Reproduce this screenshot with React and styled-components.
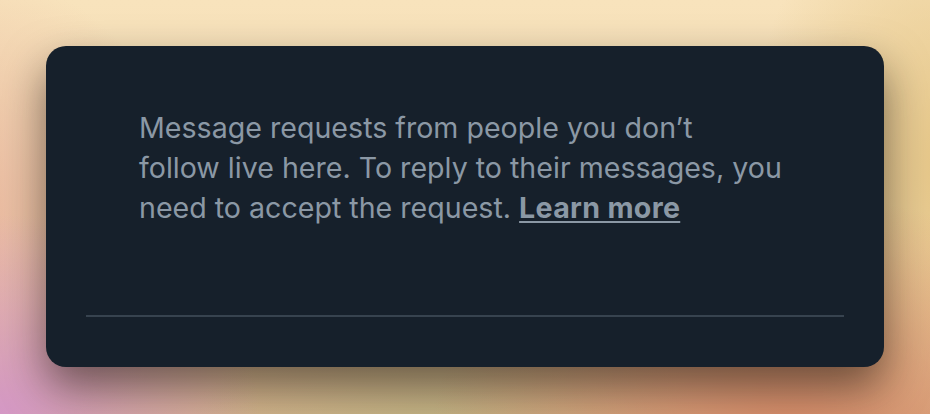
import styled, { createGlobalStyle } from "styled-components";

const GlobalStyle = createGlobalStyle`
  html, body {
    margin: 0;
    padding: 0;
  }
  body {
    width: 930px;
    height: 414px;
    overflow: hidden;
    font-family: Inter, "Noto Sans", sans-serif;
    background:
      radial-gradient(ellipse 260px 200px at 0% 100%, rgba(212, 150, 200, 0.95), rgba(212, 150, 200, 0) 100%),
      radial-gradient(ellipse 360px 240px at 85% 105%, rgba(214, 134, 100, 0.9), rgba(214, 134, 100, 0) 100%),
      radial-gradient(ellipse 260px 120px at 48% 105%, rgba(190, 180, 130, 0.9), rgba(190, 180, 130, 0) 100%),
      radial-gradient(ellipse 200px 300px at 102% 40%, rgba(228, 196, 130, 0.9), rgba(228, 196, 130, 0) 100%),
      radial-gradient(ellipse 240px 260px at -5% 55%, rgba(232, 178, 156, 0.9), rgba(232, 178, 156, 0) 100%),
      linear-gradient(180deg, #f8e3bc 0%, #f2d9b2 60%, #d8b48e 100%);
  }
`;

const Page = styled.div`
  padding: 46px;
`;

const Card = styled.section`
  height: 321px;
  background: #16202b;
  border-radius: 20px;
  box-shadow: 0 20px 44px rgba(20, 12, 8, 0.55);
  display: flex;
  flex-direction: column;
`;

const Body = styled.div`
  flex: 1;
  padding: 62px 40px 0 93px;
`;

const Message = styled.p`
  margin: 0;
  color: #8b98a5;
  font-size: 28.6px;
  line-height: 40px;
`;

const LearnMore = styled.a`
  color: #8b98a5;
  font-weight: 700;
  letter-spacing: 0.3px;
  text-decoration: underline;
  text-decoration-thickness: 2px;
  text-underline-offset: 3px;
`;

const Divider = styled.hr`
  margin: 0 40px;
  border: 0;
  height: 2px;
  background: #37434f;
`;

const Footer = styled.div`
  height: 50px;
`;

export default function App() {
  return (
    <>
      <GlobalStyle />
      <Page>
        <Card>
          <Body>
            <Message>
              Message requests from people you don’t
              <br />
              follow live here. To reply to their messages, you
              <br />
              need to accept the request.{" "}
              <LearnMore href="#">Learn more</LearnMore>
            </Message>
          </Body>
          <Divider />
          <Footer />
        </Card>
      </Page>
    </>
  );
}
